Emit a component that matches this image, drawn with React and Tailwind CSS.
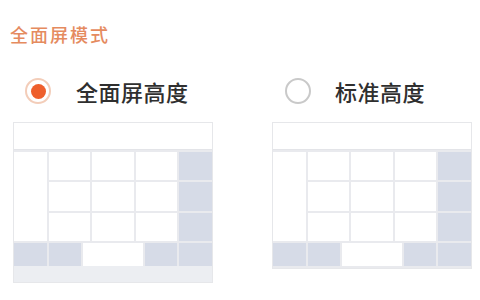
import React from 'react';

const font = { fontFamily: '"Noto Sans CJK SC", "Noto Sans", sans-serif' };

function Cell({ w, gray, className = '' }) {
  return (
    <div
      className={`${gray ? 'bg-[#d6dbe7]' : 'bg-white'} ${className}`}
      style={w ? { width: w } : undefined}
    />
  );
}

function Preview({ strip }) {
  return (
    <div className="w-[200px] flex flex-col bg-[#e9eaee] border border-[#e6e7ea]">
      {/* top bar */}
      <div className="h-[27px] bg-white border-b border-[#e3e4e8]" />
      {/* main grid */}
      <div className="flex gap-[2px] pt-[2px] h-[91px]">
        <Cell w={33} className="h-full" />
        <div className="flex-1 grid grid-cols-3 grid-rows-3 gap-[2px]">
          {Array.from({ length: 9 }).map((_, i) => (
            <Cell key={i} />
          ))}
        </div>
        <div className="w-[33px] flex flex-col gap-[2px]">
          <Cell gray className="flex-1" />
          <Cell gray className="flex-1" />
          <Cell gray className="flex-1" />
        </div>
      </div>
      {/* bottom row */}
      <div className="flex gap-[2px] pt-[2px] h-[25px]">
        <Cell gray w={33} />
        <Cell gray w={32} />
        <Cell className="flex-1" />
        <Cell gray w={32} />
        <Cell gray w={33} />
      </div>
      {strip ? <div className="h-[16px] bg-[#eceef2]" /> : <div className="h-[2px]" />}
    </div>
  );
}

export default function App() {
  return (
    <div className="w-[480px] h-[300px] bg-white overflow-hidden flex flex-col" style={font}>
      <div className="pt-[22px] pl-[10px] text-[18px] leading-[24px] tracking-[2px] font-medium text-[#e58b5f]">全面屏模式</div>

      <div className="mt-[30px] h-[30px] flex items-center">
        <div className="w-[260px] pl-[25px] flex items-center gap-[25px]">
          <div className="w-[26px] h-[26px] rounded-full border-2 border-[#f3cdb9] flex items-center justify-center">
            <div className="w-[15px] h-[15px] rounded-full bg-[#ee5f2c]" />
          </div>
          <span className="text-[22px] leading-[30px] font-medium tracking-[0.5px] text-[#2f2f2f]">全面屏高度</span>
        </div>
        <div className="pl-[25px] flex items-center gap-[24px]">
          <div className="w-[26px] h-[26px] rounded-full border-2 border-[#c9c9c9]" />
          <span className="text-[22px] leading-[30px] font-medium tracking-[0.5px] text-[#2f2f2f]">标准高度</span>
        </div>
      </div>

      <div className="mt-[16px] flex pl-[13px] gap-[59px] items-start">
        <Preview strip />
        <Preview />
      </div>
    </div>
  );
}
